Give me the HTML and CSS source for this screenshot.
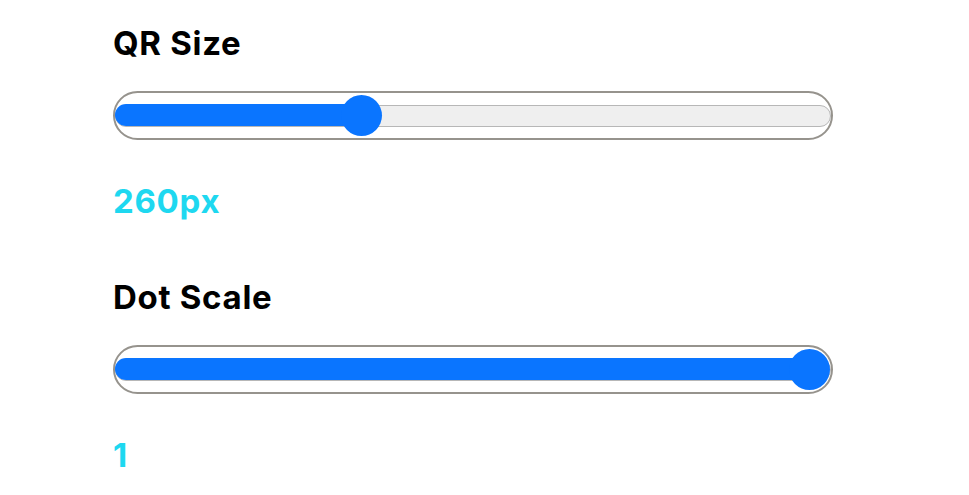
FILE: index.html
```html
<!DOCTYPE html>
<html>
<head>
<meta charset="utf-8">
<link rel="stylesheet" href="styles.css">
</head>
<body>
<div class="panel">
  <section class="field">
    <h2 class="label">QR Size</h2>
    <div class="slider">
      <div class="track">
        <div class="fill" style="width: 247px"></div>
        <div class="thumb" style="left: 225px"></div>
      </div>
    </div>
    <div class="value">260px</div>
  </section>
  <section class="field">
    <h2 class="label">Dot Scale</h2>
    <div class="slider">
      <div class="track">
        <div class="fill" style="width: 100%"></div>
        <div class="thumb" style="left: 673px"></div>
      </div>
    </div>
    <div class="value">1</div>
  </section>
</div>
</body>
</html>
```
FILE: styles.css
```css
* { box-sizing: border-box; }
html, body { margin: 0; padding: 0; background: #fff; }
body {
  font-family: Inter, "Noto Sans", "Liberation Sans", sans-serif;
  color: #000;
}
.panel {
  padding: 23px 0 0 113px;
  display: flex;
  flex-direction: column;
  gap: 56px;
}
.field {
  display: flex;
  flex-direction: column;
}
.label {
  margin: 0;
  font-size: 33px;
  font-weight: 700;
  line-height: 40px;
  letter-spacing: 0.7px;
}
.slider {
  margin-top: 28px;
  width: 720px;
  height: 49px;
  border: 2px solid #96938d;
  border-radius: 25px;
  display: flex;
  align-items: center;
}
.track {
  position: relative;
  width: 100%;
  height: 22px;
  background: #efefef;
  border: 1.5px solid #b7b7b7;
  border-radius: 11px;
}
.fill {
  position: absolute;
  left: -1.5px;
  top: -1.5px;
  height: 22px;
  background: #0a75ff;
  border-radius: 11px;
}
.thumb {
  position: absolute;
  top: 50%;
  width: 41px;
  height: 41px;
  margin-top: -20.5px;
  background: #0a75ff;
  border-radius: 50%;
}
.value {
  margin-top: 41px;
  font-size: 33px;
  font-weight: 700;
  line-height: 40px;
  letter-spacing: 0.7px;
  color: #1ed8f0;
}
```
